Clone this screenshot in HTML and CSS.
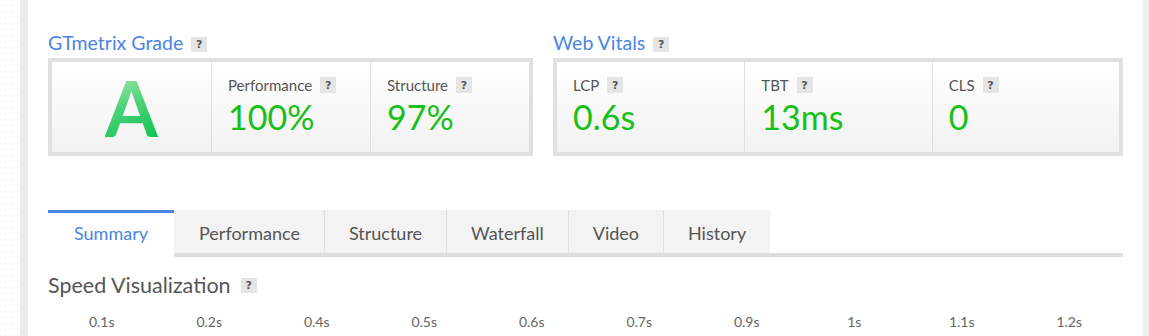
FILE: index.html
```html
<!DOCTYPE html>
<html lang="en">
<head>
  <meta charset="UTF-8" />
  <title>GTmetrix Report</title>
  <link rel="stylesheet" href="styles.css">
</head>
<body>
  <div class="side-pattern"></div>
  <main class="page">
    <div class="scores">
      <section>
        <h2 class="box-title">GTmetrix Grade <span class="help">?</span></h2>
        <div class="box">
          <div class="cell grade-cell"><span class="grade">A</span></div>
          <div class="cell">
            <div class="label">Performance <span class="help">?</span></div>
            <div class="value">100%</div>
          </div>
          <div class="cell">
            <div class="label">Structure <span class="help">?</span></div>
            <div class="value">97%</div>
          </div>
        </div>
      </section>
      <section>
        <h2 class="box-title">Web Vitals <span class="help">?</span></h2>
        <div class="box">
          <div class="cell">
            <div class="label">LCP <span class="help">?</span></div>
            <div class="value">0.6s</div>
          </div>
          <div class="cell">
            <div class="label">TBT <span class="help">?</span></div>
            <div class="value">13ms</div>
          </div>
          <div class="cell">
            <div class="label">CLS <span class="help">?</span></div>
            <div class="value">0</div>
          </div>
        </div>
      </section>
    </div>

    <nav class="tabs">
      <a href="#" class="tab active">Summary</a>
      <a href="#" class="tab">Performance</a>
      <a href="#" class="tab">Structure</a>
      <a href="#" class="tab">Waterfall</a>
      <a href="#" class="tab">Video</a>
      <a href="#" class="tab">History</a>
    </nav>

    <h3 class="section-title">Speed Visualization <span class="help">?</span></h3>
    <div class="timeline">
      <span>0.1s</span>
      <span>0.2s</span>
      <span>0.4s</span>
      <span>0.5s</span>
      <span>0.6s</span>
      <span>0.7s</span>
      <span>0.9s</span>
      <span>1s</span>
      <span>1.1s</span>
      <span>1.2s</span>
    </div>
  </main>
</body>
</html>
```

FILE: styles.css
```css
:root {
  --blue: #4a84e4;
  --green: #16c016;
  --text: #555;
  --line: #e0e0e0;
}
* { box-sizing: border-box; }
body {
  margin: 0;
  display: flex;
  min-height: 100vh;
  background: #fff;
  color: var(--text);
  font-family: Lato, "Open Sans", sans-serif;
}
.side-pattern {
  width: 20px;
  flex: none;
  background-color: #f1f1f1;
  background-image:
    linear-gradient(90deg, rgba(255,255,255,0.75) 5px, transparent 5px),
    linear-gradient(rgba(255,255,255,0.75) 5px, transparent 5px);
  background-size: 6px 6px;
}
.page {
  flex: 1;
  padding: 31px 20px 0;
  border-left: 8px solid #ececec;
  border-right: 6px solid #eeeeee;
  overflow: hidden;
}

/* score boxes */
.scores {
  display: grid;
  grid-template-columns: 485px 1fr;
  gap: 20px;
}
.box-title {
  margin: 0 0 3px;
  font-size: 19.5px;
  line-height: 24px;
  font-weight: 400;
  color: var(--blue);
  display: flex;
  align-items: center;
}
.help {
  display: inline-flex;
  align-items: center;
  justify-content: center;
  width: 16px;
  height: 16px;
  margin-left: 8px;
  background: #e5e5e5;
  color: #555;
  font-size: 11px;
  font-weight: 700;
  line-height: 1;
  font-family: "DejaVu Sans", sans-serif;
}
.box-title .help { height: 15px; margin-top: 3px; }
.box {
  display: grid;
  grid-template-columns: repeat(3, 1fr);
  height: 98px;
  border: 4px solid var(--line);
  background: linear-gradient(#fff, #f2f2f2);
}
.cell {
  padding: 13px 16px 0;
}
.cell + .cell { border-left: 1px solid var(--line); }
.label {
  font-size: 15px;
  line-height: 20px;
  display: flex;
  align-items: center;
}
.value {
  margin-top: 2px;
  font-size: 34px;
  line-height: 40px;
  color: var(--green);
}
.grade-cell {
  padding: 0;
  display: flex;
  align-items: center;
  justify-content: center;
}
.grade {
  font-size: 76px;
  font-weight: 700;
  line-height: 1;
  margin-top: 2px;
  background: linear-gradient(160deg, #b4ebb4 0%, #4fd27a 45%, #00c04a 100%);
  -webkit-background-clip: text;
  background-clip: text;
  color: transparent;
}

/* tabs */
.tabs {
  display: flex;
  align-items: flex-start;
  margin-top: 54px;
  border-bottom: 4px solid #dedede;
}
.tab {
  height: 43px;
  padding: 3px 24px 0;
  background: #f3f3f3;
  color: var(--text);
  text-decoration: none;
  font-size: 18px;
  line-height: 40px;
}
.tab + .tab { border-left: 1px solid var(--line); }
.tab.active {
  height: 47px;
  margin-bottom: -4px;
  padding: 0 26px;
  border-top: 3px solid var(--blue);
  background: #fff;
  color: var(--blue);
}
.tab.active + .tab { border-left: none; padding-left: 25px; }

/* speed visualization */
.section-title {
  margin: 14px 0 0;
  font-size: 21.5px;
  line-height: 28px;
  font-weight: 400;
  display: flex;
  align-items: center;
}
.section-title .help { margin-left: 10px; height: 15px; }
.timeline {
  display: grid;
  grid-template-columns: repeat(10, 1fr);
  margin-top: 14px;
  font-size: 14px;
  line-height: 18px;
  color: #666;
  text-align: center;
}
```
